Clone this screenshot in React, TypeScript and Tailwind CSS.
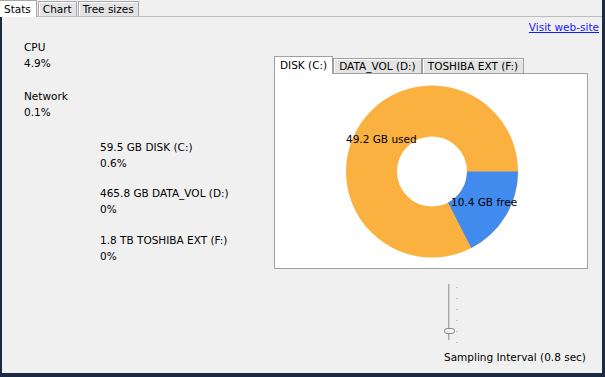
import React from 'react';

const FONT = { fontFamily: '"DejaVu Sans", Verdana, sans-serif' };

function TopTab({ label, active }: { label: string; active?: boolean }) {
  return active ? (
    <div className="h-[17px] pl-[4px] pr-[5px] bg-white border-r border-t border-[#a8a8a8] leading-[16px] relative top-[1px]">
      {label}
    </div>
  ) : (
    <div className="h-[15px] px-[4px] bg-[#e3e3e3] border border-b-0 border-[#a8a8a8] shadow-[inset_1px_1px_0_#fff] leading-[15px] ml-[1px]">
      {label}
    </div>
  );
}

function DiskTab({ label, active }: { label: string; active?: boolean }) {
  return active ? (
    <div className="h-[18px] px-[5px] bg-white border border-b-0 border-[#a0a0a0] leading-[17px] relative top-[1px]">
      {label}
    </div>
  ) : (
    <div className="h-[15px] px-[5px] bg-[#e3e3e3] border border-b-0 border-[#a0a0a0] shadow-[inset_1px_1px_0_#fff] leading-[15px]">
      {label}
    </div>
  );
}

const stats = [
  { name: 'CPU', value: '4.9%', cls: 'mt-[2px] pl-0' },
  { name: 'Network', value: '0.1%', cls: 'mt-[17px] pl-0' },
  { name: '59.5 GB DISK (C:)', value: '0.6%', cls: 'mt-[19px] pl-[76px]' },
  { name: '465.8 GB DATA_VOL (D:)', value: '0%', cls: 'mt-[14px] pl-[76px]' },
  { name: '1.8 TB TOSHIBA EXT (F:)', value: '0%', cls: 'mt-[15px] pl-[76px]' },
];

function Donut() {
  const cx = 157;
  const cy = 97.5;
  return (
    <svg width="312" height="194" viewBox="0 0 312 194" className="block">
      <circle cx={cx} cy={cy} r={60.5} fill="none" stroke="#fbb13f" strokeWidth={51} />
      <path
        d={`M ${cx + 86} ${cy} A 86 86 0 0 1 ${cx + 39.3} ${cy + 76.5} L ${cx + 16} ${cy + 31.1} A 35 35 0 0 0 ${cx + 35} ${cy} Z`}
        fill="#418bef"
      />
      <text x={71} y={69} fontSize="10.5" fill="#000" style={FONT}>
        49.2 GB used
      </text>
      <text x={176} y={132} fontSize="10.5" fill="#000" style={FONT}>
        10.4 GB free
      </text>
    </svg>
  );
}

function VSlider() {
  const ticks = [3, 14, 25, 36, 47, 58];
  return (
    <div className="relative h-[60px] w-[20px]">
      <div className="absolute left-[4px] top-0 h-[56px] w-[2px] bg-[#d2d2d2] border-l border-[#a8a8a8]" />
      {ticks.map((t) => (
        <div key={t} className="absolute left-[12px] w-[2px] h-[1px] bg-[#c8c8c8]" style={{ top: t }} />
      ))}
      <div className="absolute left-0 top-[44px] w-[11px] h-[6px] rounded-[3px] bg-[#f4f4f4] border border-[#8a8a8a]" />
    </div>
  );
}

export default function App() {
  return (
    <div
      className="w-[605px] h-[377px] bg-[#1c2a44] pl-[2px] pr-[3px] pb-[4px] flex flex-col text-[10.5px] text-black"
      style={FONT}
    >
      <div className="flex-1 flex flex-col bg-[#f0f0f0]">
        <div className="h-[17px] flex items-end border-b border-[#bcbcbc] -ml-[2px]">
          <TopTab label="Stats" active />
          <TopTab label="Chart" />
          <TopTab label="Tree sizes" />
        </div>
        <div className="h-[20px] flex justify-end pr-[3px] pt-[3px]">
          <a className="leading-[14px] text-[#1a1aff] underline" href="#">
            Visit web-site
          </a>
        </div>
        <div className="flex-1 flex">
          <div className="w-[272px] pl-[22px]">
            {stats.map((s) => (
              <div key={s.name} className={`leading-[16px] ${s.cls}`}>
                <div>{s.name}</div>
                <div>{s.value}</div>
              </div>
            ))}
          </div>
          <div className="flex-1 flex flex-col">
            <div className="mt-[19px] flex items-end h-[17px]">
              <DiskTab label="DISK (C:)" active />
              <DiskTab label="DATA_VOL (D:)" />
              <DiskTab label="TOSHIBA EXT (F:)" />
            </div>
            <div className="w-[314px] h-[196px] bg-white border border-[#a0a0a0]">
              <Donut />
            </div>
            <div className="ml-[170px] mt-[15px]">
              <VSlider />
            </div>
            <div className="ml-[170px] mt-[5px] leading-[16px]">Sampling Interval (0.8 sec)</div>
          </div>
        </div>
      </div>
    </div>
  );
}
